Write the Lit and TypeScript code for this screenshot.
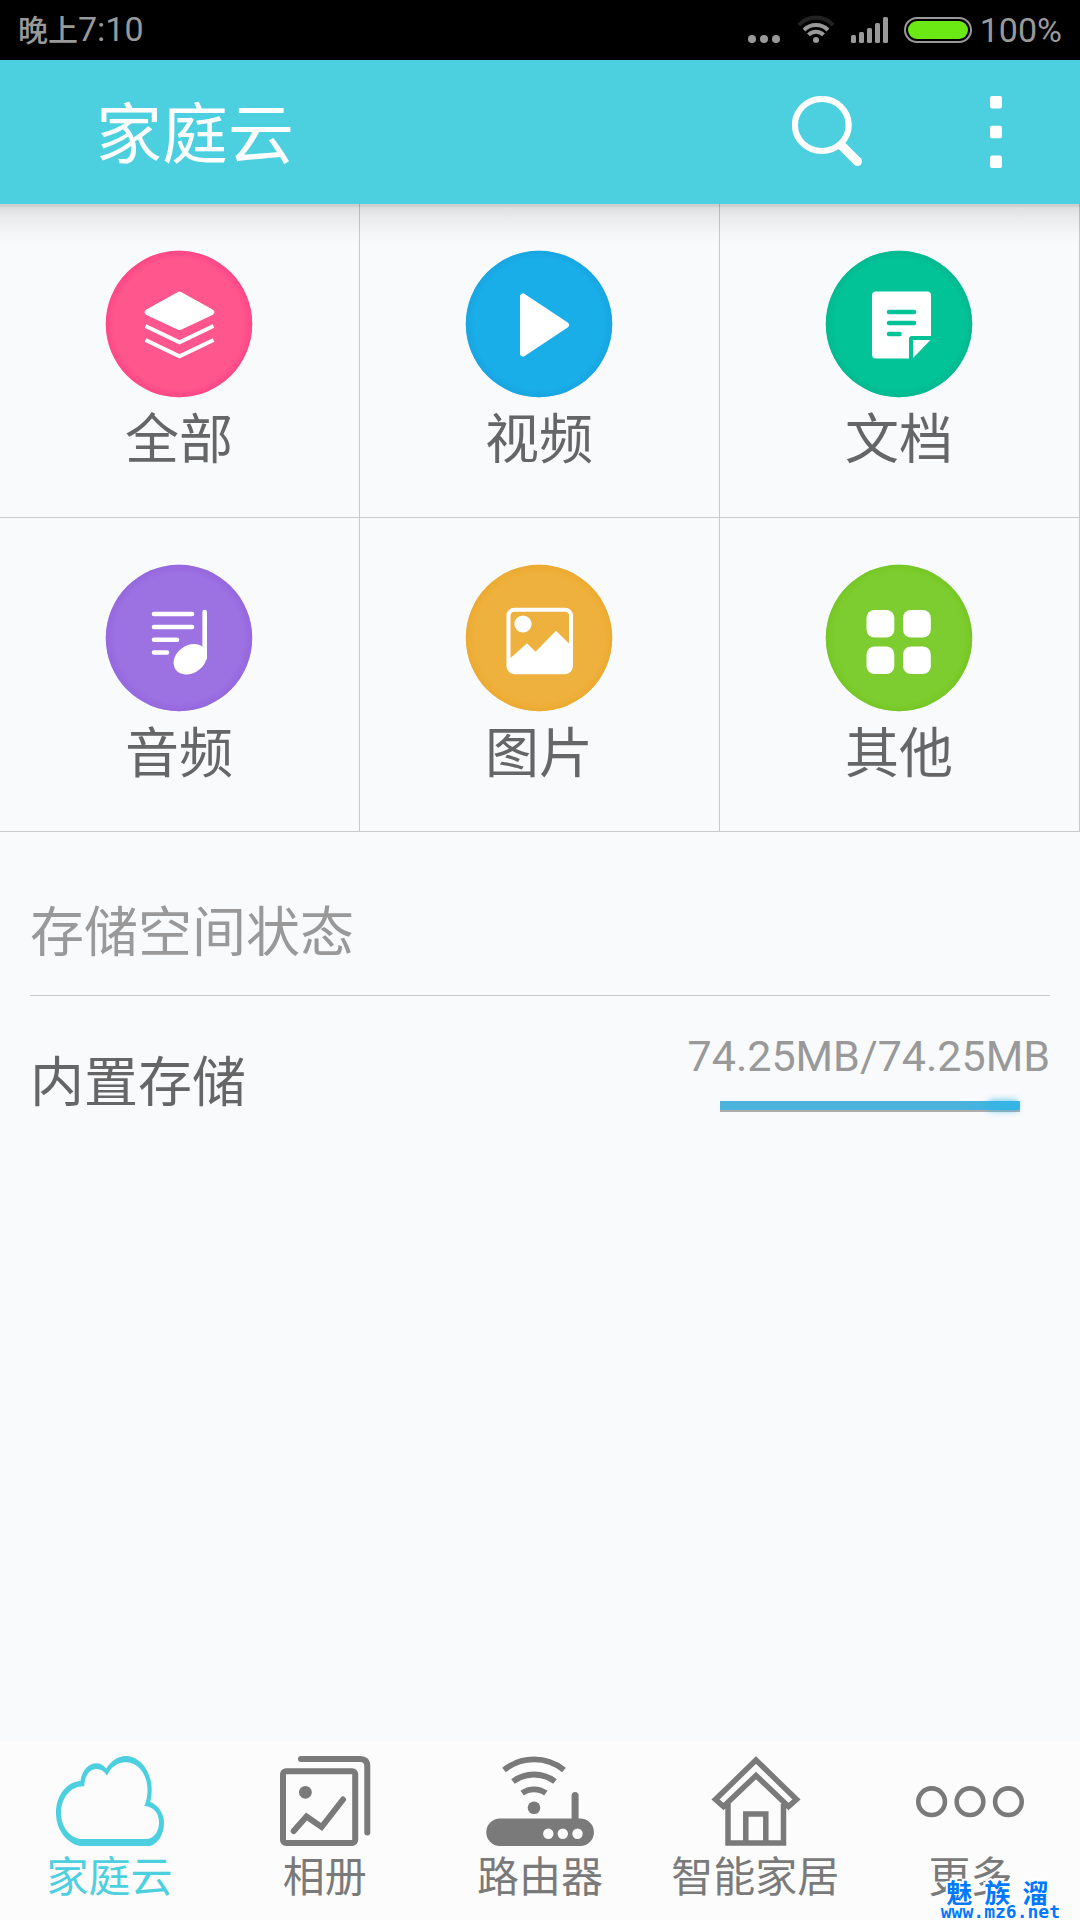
import { LitElement, html, css, svg, type SVGTemplateResult } from "lit";
import { customElement, property } from "lit/decorators.js";

interface Category {
  id: string;
  label: string;
  color: string;
  edge: string;
  glyph: SVGTemplateResult;
}

interface Tab {
  id: string;
  label: string;
  glyph: SVGTemplateResult;
}

const categories: Category[] = [
  {
    id: "all",
    label: "全部",
    color: "#ff568e",
    edge: "#fb3d80",
    glyph: svg`
      <path d="M73.500 43.200 Q75.500 42 77.500 43.200 L108.500 60.500 Q112.500 63 108.500 66 L77.500 80.500 Q75.500 81.500 73.500 80.500 L42.500 66 Q38.500 63 42.500 60.500Z" fill="#fff"/>
      <path d="M41.500 77 L75.500 93.300 L109.500 77 M41.500 91 L75.500 107.300 L109.500 91" fill="none" stroke="#fff" stroke-width="4"/>`,
  },
  {
    id: "video",
    label: "视频",
    color: "#1aaee9",
    edge: "#159fdb",
    glyph: svg`<path d="M59 47.500 V104.500 L102 76Z" fill="#fff" stroke="#fff" stroke-width="6" stroke-linejoin="round"/>`,
  },
  {
    id: "docs",
    label: "文档",
    color: "#02c398",
    edge: "#04b189",
    glyph: svg`
      <path d="M52 42.500 H103 Q107 42.500 107 46.500 V87 H88 Q85 87 85 90 V109.500 H52 Q48 109.500 48 105.500 V46.500 Q48 42.500 52 42.500Z M89 91 H106.500 L89 109Z" fill="#fff"/>
      <path d="M65 63 H90 M65 74 H90 M65 85 H75.500" stroke="#02c398" stroke-width="4.500" stroke-linecap="round"/>`,
  },
  {
    id: "audio",
    label: "音频",
    color: "#9c71e2",
    edge: "#9061dc",
    glyph: svg`
      <path d="M50 51 H88 M50 64 H88 M50 76.700 H73 M50 89.500 H63 M100.700 49 V95" stroke="#fff" stroke-width="4.600" stroke-linecap="round"/>
      <ellipse cx="86.200" cy="96.300" rx="17.800" ry="13.800" transform="rotate(-35 86.200 96.300)" fill="#fff"/>`,
  },
  {
    id: "pictures",
    label: "图片",
    color: "#efb13d",
    edge: "#e9a528",
    glyph: svg`
      <rect x="44.500" y="46.700" width="62.500" height="62.500" rx="6" fill="none" stroke="#fff" stroke-width="4"/>
      <circle cx="59" cy="61" r="8.600" fill="#fff"/>
      <path d="M46 95.500 L63 80.300 L71.500 88.700 L92 67.700 L105.500 81 V108 H46Z" fill="#fff"/>`,
  },
  {
    id: "other",
    label: "其他",
    color: "#7ecd30",
    edge: "#6fc31d",
    glyph: svg`
      <g fill="#fff">
        <rect x="42.500" y="47" width="27.800" height="27.600" rx="8"/>
        <rect x="79" y="47" width="27.800" height="27.600" rx="8"/>
        <rect x="42.500" y="83.500" width="27.800" height="27.600" rx="8"/>
        <rect x="79" y="83.500" width="27.800" height="27.600" rx="8"/>
      </g>`,
  },
];

const tabs: Tab[] = [
  {
    id: "cloud",
    label: "家庭云",
    glyph: svg`<path fill="currentColor" fill-rule="evenodd" d="M24 90 C10 87 0 73 0 57 C0 40 10 26 24.500 25 C26 14 33 7.300 40 7.300 C44 7.300 47.500 9 50.300 12.500 C55 5 62 0 69.500 0 C84 0 95.700 15 95.700 34 C95.700 38 95.200 42 94.200 46 C102 49 108 57 108 67 C108 78 102 88 94 90Z M24 83 H90 C97.500 83 103 76 103 66.500 C103 57 97.500 50.500 88.300 50 C90.500 45 91.500 40 91.500 34 C91.500 18 82 6.300 69.500 6.300 C62 6.300 55 11 51 19.500 C48 15 44.500 13 40 13 C33.500 13 28.500 20 28.300 30.300 C15 29.500 5 42 5 57 C5 70 13 81 24 83Z"/>`,
  },
  {
    id: "album",
    label: "相册",
    glyph: svg`
      <g fill="none" stroke="currentColor" stroke-width="6" stroke-linecap="round">
        <rect x="12" y="15.300" width="72.200" height="71.700" rx="3"/>
        <path d="M30 3 H89 Q96.300 3 96.300 10 V76.500"/>
        <path d="M22.700 75 L35.500 60.500 L50.600 71 L72 43.500"/>
      </g>
      <circle cx="34.400" cy="36.300" r="6.400" fill="currentColor"/>`,
  },
  {
    id: "router",
    label: "路由器",
    glyph: svg`
      <path fill="currentColor" fill-rule="evenodd" d="M14 62.500 H85.600 V39.500 Q85.600 36 89.100 36 Q92.600 36 92.600 39.500 V62.500 H94.200 A13.750 13.750 0 0 1 94.200 90 H14 A13.750 13.750 0 0 1 14 62.500Z"/>
      <g fill="#fcfcfc"><circle cx="62.300" cy="77.700" r="5.200"/><circle cx="76.800" cy="77.700" r="5.200"/><circle cx="91.500" cy="77.700" r="5.200"/></g>
      <g fill="none" stroke="currentColor" stroke-width="5.800">
        <path d="M18 14 A48 48 0 0 1 78 14"/>
        <path d="M27 25.500 A35 35 0 0 1 69 25.500"/>
        <path d="M36.200 37.200 A20 20 0 0 1 59.800 37.200"/>
      </g>
      <circle cx="48" cy="51.700" r="6.300" fill="currentColor"/>`,
  },
  {
    id: "home",
    label: "智能家居",
    glyph: svg`
      <g fill="none" stroke="currentColor" stroke-width="5.500">
        <path d="M55 4 L14.500 43.500 L22.500 50.500 L55 19.500 L87.500 50.500 L95.500 43.500Z"/>
        <path d="M27 48 V87 H82.500 V48 M44.800 87 V58 H64.800 V87"/>
      </g>`,
  },
  {
    id: "more",
    label: "更多",
    glyph: svg`
      <g fill="none" stroke="currentColor" stroke-width="4.600">
        <circle cx="15.600" cy="45.700" r="13.300"/><circle cx="54" cy="45.700" r="13.300"/><circle cx="92.400" cy="45.700" r="13.300"/>
      </g>`,
  },
];

@customElement("status-bar")
class StatusBar extends LitElement {
  static styles = css`
    :host {
      display: flex;
      justify-content: space-between;
      align-items: center;
      height: 60px;
      padding: 0 18px;
      background: #000;
      color: #999;
      font-size: 34px;
      line-height: 60px;
    }
    .period { font-size: 30px; font-weight: 500; }
    .icons { display: flex; align-items: center; gap: 16px; }
    .battery { display: flex; align-items: center; gap: 8px; }
    svg { display: block; }
  `;

  render() {
    return html`
      <div class="time"><span class="period">晚上</span>7:10</div>
      <div class="icons">
        <svg width="34" height="60" viewBox="0 0 34 60" fill="#999" aria-hidden="true">
          <circle cx="5" cy="39" r="4"/><circle cx="17" cy="39" r="4"/><circle cx="29" cy="39" r="4"/>
        </svg>
        <svg width="38" height="60" viewBox="0 0 38 60" fill="none" stroke="#999" stroke-width="4" aria-hidden="true">
          <path d="M2 25 A23 23 0 0 1 36 25" stroke="#222"/>
          <path d="M7 30 A17 17 0 0 1 31 30"/>
          <path d="M11.500 34.800 A10.500 10.500 0 0 1 26.500 34.800"/>
          <circle cx="19" cy="40" r="3" fill="#999" stroke="none"/>
        </svg>
        <svg width="37" height="60" viewBox="0 0 37 60" fill="#999" aria-hidden="true">
          <rect x="0" y="35" width="5" height="8" rx="1.500"/>
          <rect x="8" y="32" width="5" height="11" rx="1.500"/>
          <rect x="16" y="28" width="5" height="15" rx="1.500"/>
          <rect x="24" y="23" width="5" height="20" rx="1.500"/>
          <rect x="32" y="17" width="5" height="26" rx="1.500"/>
        </svg>
        <div class="battery">
          <svg width="68" height="60" viewBox="0 0 68 60" aria-hidden="true">
            <rect x="1" y="18" width="66" height="24" rx="12" fill="none" stroke="#999" stroke-width="2"/>
            <rect x="4" y="21" width="60" height="18" rx="9" fill="#6ae914"/>
          </svg>
          <span>100%</span>
        </div>
      </div>
    `;
  }
}

@customElement("category-tile")
class CategoryTile extends LitElement {
  @property({ attribute: false }) category!: Category;

  static styles = css`
    :host {
      display: block;
      border-right: 1px solid #c9cacc;
      border-bottom: 1px solid #c9cacc;
    }
    .tile {
      display: flex;
      flex-direction: column;
      align-items: center;
      gap: 4px;
      width: 100%;
      margin: 0;
      padding: 45px 1px 38px 0;
      border: 0;
      background: none;
      color: #666;
      font: inherit;
      font-size: 54px;
      line-height: 76px;
      cursor: pointer;
    }
    svg { display: block; }
  `;

  render() {
    const { label, color, edge, glyph } = this.category;
    return html`
      <button class="tile" type="button">
        <svg width="150" height="150" viewBox="0 0 150 150" aria-hidden="true">
          <defs>
            <radialGradient id="disc">
              <stop offset="0.88" stop-color=${color} />
              <stop offset="1" stop-color=${edge} />
            </radialGradient>
          </defs>
          <circle cx="75" cy="75" r="73.2" fill=${color} />
          <circle cx="75" cy="75" r="73.2" fill="url(#disc)" opacity="0.6" />
          ${glyph}
        </svg>
        <span>${label}</span>
      </button>
    `;
  }
}

@customElement("storage-row")
class StorageRow extends LitElement {
  @property() name = "";
  @property({ type: Number }) used = 0;
  @property({ type: Number }) total = 1;

  static styles = css`
    :host {
      display: flex;
      justify-content: space-between;
      align-items: flex-start;
      padding: 36px 0;
    }
    .name {
      padding-top: 20px;
      color: #666;
      font-size: 54px;
      line-height: 64px;
    }
    .usage {
      display: flex;
      flex-direction: column;
      align-items: flex-end;
      gap: 21px;
      color: #999;
      font-size: 43px;
      line-height: 48px;
    }
    .track {
      width: 300px;
      height: 11px;
      margin-right: 30px;
      background: #adabab;
    }
    .fill {
      position: relative;
      height: 9px;
      background: linear-gradient(90deg, #4bb3dc calc(100% - 60px), #35b5e5);
      border-radius: 0 2px 2px 0;
    }
    .fill::after {
      content: "";
      position: absolute;
      right: 2px;
      top: -1px;
      width: 30px;
      height: 11px;
      border-radius: 4px;
      background: #35b5e5;
      filter: blur(3px);
      opacity: 0.7;
    }
  `;

  render() {
    const percent = Math.round((this.used / this.total) * 100);
    return html`
      <div class="name">${this.name}</div>
      <div class="usage">
        <span>${this.used}MB/${this.total}MB</span>
        <div class="track" role="progressbar" aria-label=${this.name} aria-valuenow=${percent}>
          <div class="fill" style="width: ${percent}%"></div>
        </div>
      </div>
    `;
  }
}

@customElement("app-root")
class AppRoot extends LitElement {
  static styles = css`
    :host {
      position: relative;
      display: flex;
      flex-direction: column;
      min-height: 100vh;
      background: #f8fafc;
      font-family: Roboto, "Noto Sans CJK SC", sans-serif;
    }
    .header {
      position: relative;
      display: flex;
      align-items: center;
      height: 144px;
      padding: 0 48px 0 96px;
      background: #4ccfdf;
      color: #fff;
    }
    .header::after {
      content: "";
      position: absolute;
      left: 0;
      right: 0;
      top: 100%;
      height: 42px;
      background: linear-gradient(rgba(0, 0, 0, 0.17) 3px, rgba(0, 0, 0, 0.11) 3px, rgba(0, 0, 0, 0.06) 14px, rgba(0, 0, 0, 0.02) 30px, transparent);
      pointer-events: none;
    }
    .title {
      flex: 1;
      margin: 0;
      padding-top: 8px;
      font-size: 66px;
      font-weight: 400;
      line-height: 80px;
    }
    .actions { display: flex; gap: 96px; }
    .action {
      margin: 0;
      padding: 0;
      border: 0;
      background: none;
      color: inherit;
      cursor: pointer;
    }
    svg { display: block; }
    .grid {
      display: grid;
      grid-template-columns: repeat(3, 1fr);
    }
    .storage {
      flex: 1;
      padding: 0 30px;
    }
    .heading {
      margin: 0;
      padding: 70px 0 29px;
      border-bottom: 1px solid #c9cacc;
      color: #999;
      font-size: 54px;
      font-weight: 400;
      line-height: 64px;
    }
    .tabs {
      display: flex;
      padding: 15px 2px 12px;
      background: #fcfcfc;
    }
    .tab {
      flex: 1;
      display: flex;
      flex-direction: column;
      align-items: center;
      gap: 2px;
      color: #7a7a7a;
      font-size: 42px;
      line-height: 60px;
      text-decoration: none;
    }
    .active { color: #4ccfdf; }
    .watermark {
      position: absolute;
      right: 20px;
      bottom: 0;
      display: flex;
      flex-direction: column;
      align-items: center;
      color: #0078ff;
      -webkit-text-stroke: 4px #fff;
      paint-order: stroke fill;
      pointer-events: none;
    }
    .mark-name {
      display: flex;
      gap: 12px;
      padding-right: 6px;
      font-size: 26px;
      font-weight: 700;
      line-height: 20px;
    }
    .mark-site {
      font-family: "DejaVu Sans Mono", monospace;
      font-size: 18px;
      font-weight: 700;
      line-height: 16px;
    }
  `;

  render() {
    return html`
      <status-bar></status-bar>
      <header class="header">
        <h1 class="title">家庭云</h1>
        <div class="actions">
          <button class="action" type="button" aria-label="搜索">
            <svg width="72" height="72" viewBox="0 0 72 72" fill="none" stroke="#fff" aria-hidden="true">
              <ellipse cx="29.800" cy="29" rx="26.900" ry="26" stroke-width="6.200"/>
              <path d="M48.500 48.500 L65.500 65.500" stroke-width="9" />
              <circle cx="65.500" cy="65.500" r="4.500" fill="#fff" stroke="none"/>
            </svg>
          </button>
          <button class="action" type="button" aria-label="菜单">
            <svg width="72" height="72" viewBox="0 0 72 72" fill="#fff" aria-hidden="true">
              <rect x="30" y="0" width="12" height="12.500" rx="2"/>
              <rect x="30" y="29.700" width="12" height="12.500" rx="2"/>
              <rect x="30" y="59.500" width="12" height="12.500" rx="2"/>
            </svg>
          </button>
        </div>
      </header>
      <main class="grid">
        ${categories.map((c) => html`<category-tile .category=${c}></category-tile>`)}
      </main>
      <section class="storage">
        <h2 class="heading">存储空间状态</h2>
        <storage-row name="内置存储" used="74.25" total="74.25"></storage-row>
      </section>
      <nav class="tabs">
        ${tabs.map(
          (t, i) => html`
            <a class=${i === 0 ? "tab active" : "tab"} href="#${t.id}">
              <svg width="108" height="90" viewBox="0 0 108 90" aria-hidden="true">${t.glyph}</svg>
              <span>${t.label}</span>
            </a>
          `
        )}
      </nav>
      <div class="watermark">
        <div class="mark-name"><span>魅</span><span>族</span><span>溜</span></div>
        <div class="mark-site">www.mz6.net</div>
      </div>
    `;
  }
}
